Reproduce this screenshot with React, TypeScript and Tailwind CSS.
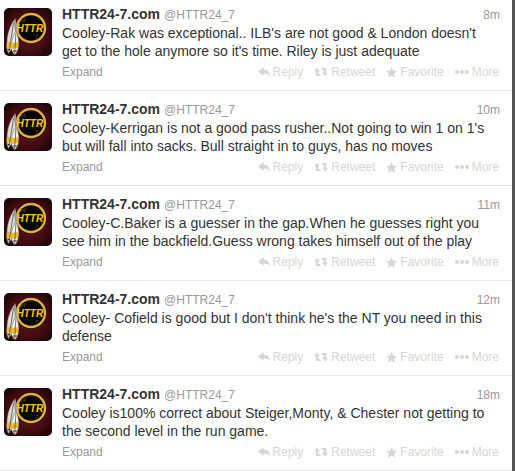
import { ReactNode, useId } from "react";

type Tweet = {
  id: number;
  age: string;
  text: string;
};

const AUTHOR = { name: "HTTR24-7.com", handle: "@HTTR24_7" };

const tweets: Tweet[] = [
  {
    id: 1,
    age: "8m",
    text: "Cooley-Rak was exceptional.. ILB's are not good & London doesn't get to the hole anymore so it's time. Riley is just adequate",
  },
  {
    id: 2,
    age: "10m",
    text: "Cooley-Kerrigan is not a good pass rusher..Not going to win 1 on 1's but will fall into sacks. Bull straight in to guys, has no moves",
  },
  {
    id: 3,
    age: "11m",
    text: "Cooley-C.Baker is a guesser in the gap.When he guesses right you see him in the backfield.Guess wrong takes himself out of the play",
  },
  {
    id: 4,
    age: "12m",
    text: "Cooley- Cofield is good but I don't think he's the NT you need in this defense",
  },
  {
    id: 5,
    age: "18m",
    text: "Cooley is100% correct about Steiger,Monty, & Chester not getting to the second level in the run game.",
  },
];

function Avatar() {
  const glow = useId();

  return (
    <svg
      viewBox="0 0 48 48"
      className="h-12 w-12 shrink-0 rounded-[5px]"
      role="img"
      aria-label={AUTHOR.name}
    >
      <defs>
        <radialGradient id={glow} cx="50%" cy="50%" r="68%">
          <stop offset="0" stopColor="#64141c" />
          <stop offset="0.6" stopColor="#430c12" />
          <stop offset="1" stopColor="#140405" />
        </radialGradient>
      </defs>
      <rect width="48" height="48" fill={`url(#${glow})`} />
      <circle cx="27" cy="20" r="16" fill="#1a0808" />
      <circle cx="27" cy="20" r="14" fill="#080705" stroke="#e3b03a" strokeWidth="2.4" />
      <text x="16" y="14" fontSize="5" fill="#5a4815" fontStyle="italic">24</text>
      <text x="31" y="31" fontSize="5" fill="#6b561a" fontStyle="italic">7</text>
      {/* feathers */}
      <path d="M11 10 C13 15 13 19 13 26 L9 30 L8 18 Z" fill="#a3a29d" />
      <path d="M10 12 C6 18 3 26 3 34 C2 39 3 43 4.5 45.5 C8 41 11 34 12 26 Z" fill="#dddcd6" stroke="#65625d" strokeWidth=".5" />
      <path d="M12 23 C8.5 29 6.5 36 7.5 42 L10.5 47 L12.5 45 C15.5 40 15.5 30 12 23 Z" fill="#f4f3ed" stroke="#65625d" strokeWidth=".5" />
      <path d="M3 33 L7.6 35 L6.6 40 L2.8 39 Z" fill="#efb92a" />
      <path d="M7.4 35 L14.6 34 L13.6 40 L7.6 41 Z" fill="#efb92a" />
      <path d="M9.5 15 L5 44 M12 25 L10.6 46" stroke="#55524b" strokeWidth=".8" fill="none" />
      <path d="M3.5 41 L5.8 42 M9 43 L13 43" stroke="#33302b" strokeWidth="1.2" fill="none" />
      <text
        x="12.5"
        y="24"
        fontSize="10"
        fontWeight="bold"
        fontStyle="italic"
        fill="#f9c816"
      >
        HTTR
      </text>
    </svg>
  );
}

function ReplyIcon() {
  return (
    <svg viewBox="0 0 12 10" className="h-[10px] w-3" fill="currentColor" aria-hidden="true">
      <path d="M5.5 0 L0 4.5 L5.5 9 V6.5 C8.4 6.3 10.6 6.8 12 9.2 C11.8 5.2 9.4 2.6 5.5 2.5 Z" />
    </svg>
  );
}

function RetweetIcon() {
  return (
    <svg viewBox="0 0 14 10" className="h-[10px] w-[14px]" fill="currentColor" aria-hidden="true">
      <path d="M3 .8 L0 4.2 H1.9 V9 H7.2 L5.6 6.9 H4.2 V4.2 H6 Z" />
      <path d="M11 9.2 L14 5.8 H12.1 V1 H6.8 L8.4 3.1 H9.8 V5.8 H8 Z" />
    </svg>
  );
}

function StarIcon() {
  return (
    <svg viewBox="0 0 10 10" className="h-[11px] w-[11px]" fill="currentColor" aria-hidden="true">
      <path d="M5 0 L6.5 3.4 L10 3.7 L7.4 6.1 L8.2 9.7 L5 7.8 L1.8 9.7 L2.6 6.1 L0 3.7 L3.5 3.4 Z" />
    </svg>
  );
}

function MoreIcon() {
  return (
    <svg viewBox="0 0 14 10" className="h-[10px] w-[14px]" fill="currentColor" aria-hidden="true">
      <circle cx="2" cy="5" r="2" />
      <circle cx="7" cy="5" r="2" />
      <circle cx="12" cy="5" r="2" />
    </svg>
  );
}

function Action({ icon, label }: { icon: ReactNode; label: string }) {
  return (
    <button type="button" className="flex items-center gap-[3px] hover:text-[#999]">
      {icon}
      <span>{label}</span>
    </button>
  );
}

function TweetRow({ tweet }: { tweet: Tweet }) {
  return (
    <li className="flex gap-[10px] border-b border-[#e8e8e8] py-[9px] pr-3 pl-1">
      <div className="pt-[3px]">
        <Avatar />
      </div>
      <article className="min-w-0 flex-1">
        <header className="flex h-[18px] items-baseline justify-between leading-[18px]">
          <a href="#profile" className="flex items-baseline gap-1">
            <strong className="text-sm leading-[18px] text-[#333]">{AUTHOR.name}</strong>
            <span className="text-xs leading-[18px] text-[#999]">{AUTHOR.handle}</span>
          </a>
          <a href="#tweet" className="text-xs leading-[18px] text-[#999]">
            {tweet.age}
          </a>
        </header>
        <p className="mt-px min-h-9 pr-2 text-sm leading-[18px] text-[#333]">{tweet.text}</p>
        <footer className="mt-[3px] flex items-center justify-between text-xs leading-[18px]">
          <button type="button" className="text-[#999]">
            Expand
          </button>
          <div className="flex gap-[11px] pr-px text-[#d6d6d6]">
            <Action icon={<ReplyIcon />} label="Reply" />
            <Action icon={<RetweetIcon />} label="Retweet" />
            <Action icon={<StarIcon />} label="Favorite" />
            <Action icon={<MoreIcon />} label="More" />
          </div>
        </footer>
      </article>
    </li>
  );
}

export default function App() {
  return (
    <main className="overflow-hidden border-r-[3px] border-[#555] bg-white font-['Liberation_Sans',Arial,sans-serif]">
      <ol className="-mt-1">
        {tweets.map((tweet) => (
          <TweetRow key={tweet.id} tweet={tweet} />
        ))}
      </ol>
    </main>
  );
}
